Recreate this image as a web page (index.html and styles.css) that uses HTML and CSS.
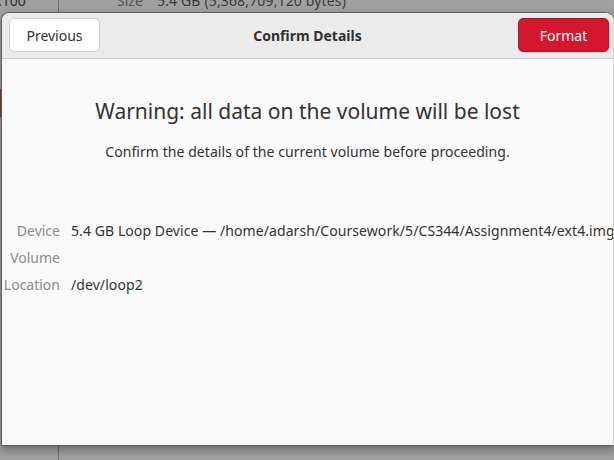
FILE: index.html
```html
<!DOCTYPE html>
<html>
<head>
<meta charset="utf-8">
<link rel="stylesheet" href="styles.css">
</head>
<body>
<div class="desktop">
  <div class="behind">
    <span class="b-num">.100</span>
    <span class="b-label">Size</span>
    <span class="b-val">5.4 GB (5,368,709,120 bytes)</span>
  </div>
  <div class="vline"></div>
  <div class="redtab"></div>

  <div class="dialog">
    <div class="header">
      <button class="btn btn-prev">Previous</button>
      <div class="title">Confirm Details</div>
      <button class="btn btn-format">Format</button>
    </div>
    <div class="content">
      <h1 class="warn">Warning: all data on the volume will be lost</h1>
      <p class="sub">Confirm the details of the current volume before proceeding.</p>
      <div class="details">
        <span class="lbl">Device</span><span class="val">5.4 GB Loop Device — /home/adarsh/Coursework/5/CS344/Assignment4/ext4.img</span>
        <span class="lbl">Volume</span><span class="val"></span>
        <span class="lbl">Location</span><span class="val">/dev/loop2</span>
      </div>
    </div>
  </div>
</div>
</body>
</html>
```

FILE: styles.css
```css
* { box-sizing: border-box; }
html, body { margin: 0; padding: 0; }
body {
  width: 614px;
  height: 460px;
  overflow: hidden;
  background: #9d9d9d;
  font-family: "Noto Sans", "DejaVu Sans", sans-serif;
}
.desktop {
  position: relative;
  width: 614px;
  height: 460px;
  overflow: hidden;
  background: #a0a0a0;
}
.behind {
  position: absolute;
  left: 0;
  top: -9px;
  width: 614px;
  height: 20px;
  font-size: 14px;
  color: #2e2e2e;
}
.b-num { position: absolute; left: -2px; top: 0; }
.b-label { position: absolute; left: 117px; top: 0; color: #555; }
.b-val { position: absolute; left: 157px; top: 0; color: #3a3a3a; letter-spacing: 0.15px; }
.vline {
  position: absolute;
  left: 58px;
  top: 0;
  width: 1px;
  height: 460px;
  background: #6e6e6e;
}
.redtab {
  position: absolute;
  left: 0;
  top: 89px;
  width: 3px;
  height: 28px;
  background: #8a3a20;
}
.dialog {
  position: absolute;
  left: 1px;
  top: 12px;
  width: 613px;
  height: 434px;
  background: #fafafa;
  border: 1px solid #5f5f5f;
  border-right-color: #d0d0d0;
  border-radius: 8px 9px 0 0;
  box-shadow: 0 4px 10px rgba(0,0,0,0.35);
  display: flex;
  flex-direction: column;
  overflow: hidden;
}
.header {
  height: 46px;
  flex: none;
  background: #ebebeb;
  border-bottom: 1px solid #c9c9c9;
  display: flex;
  align-items: center;
  justify-content: space-between;
  padding: 0 4px 1px 7px;
  position: relative;
}
.title {
  position: absolute;
  left: 0;
  right: 0;
  text-align: center;
  font-weight: bold;
  font-size: 14px;
  color: #303030;
  pointer-events: none;
}
.btn {
  height: 34px;
  border-radius: 5px;
  font-family: inherit;
  font-size: 14px;
  padding: 0;
  position: relative;
  z-index: 1;
}
.btn-prev {
  width: 91px;
  background: #ffffff;
  border: 1px solid #cdcdcd;
  color: #333;
}
.btn-format {
  width: 91px;
  background: #d3172e;
  border: 1px solid #b31226;
  color: #ffffff;
}
.content {
  flex: 1;
  display: flex;
  flex-direction: column;
  align-items: center;
  color: #333;
}
.warn {
  margin: 37px 0 0 0;
  font-weight: normal;
  font-size: 21px;
  line-height: 30px;
  color: #333;
}
.sub {
  margin: 16px 0 0 0;
  font-size: 14px;
  line-height: 20px;
  letter-spacing: 0.06px;
  color: #333;
}
.details {
  align-self: stretch;
  margin-top: 59px;
  display: grid;
  grid-template-columns: 58px auto;
  column-gap: 11px;
  row-gap: 7px;
  font-size: 14px;
  line-height: 20px;
  white-space: nowrap;
}
.lbl {
  text-align: right;
  color: #8b8b8b;
}
.val {
  color: #333;
  letter-spacing: 0.08px;
}
```
